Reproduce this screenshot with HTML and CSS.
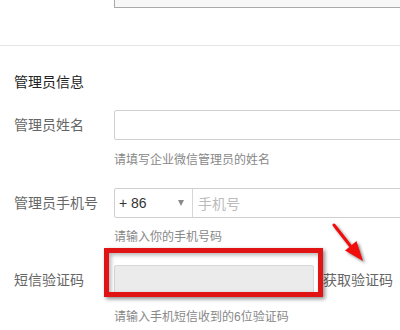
FILE: index.html
```html
<!DOCTYPE html>
<html lang="zh-CN">
<head>
<meta charset="utf-8">
<title>管理员信息</title>
<link rel="stylesheet" href="styles.css">
</head>
<body>
<div class="page">
  <div class="prev"><div class="prev-input"></div></div>
  <div class="divider"></div>
  <div class="section">
    <div class="title">管理员信息</div>

    <div class="row row-name">
      <div class="label">管理员姓名</div>
      <div class="input wide"></div>
    </div>
    <div class="hint hint-name">请填写企业微信管理员的姓名</div>

    <div class="row row-phone">
      <div class="label">管理员手机号</div>
      <div class="phone">
        <div class="cc"><span class="cc-text">+ 86</span><span class="caret"></span></div>
        <div class="ph">手机号</div>
      </div>
    </div>
    <div class="hint hint-phone">请输入你的手机号码</div>

    <div class="row row-sms">
      <div class="label">短信验证码</div>
      <div class="sms-field">
        <div class="sms-input"></div>
        <div class="redbox"></div>
      </div>
      <div class="get-code">获取验证码</div>
    </div>
    <div class="hint hint-sms">请输入手机短信收到的6位验证码</div>
  </div>

  <svg class="arrow" viewBox="325 218 50 50" width="50" height="50" aria-hidden="true">
    <line x1="334" y1="225" x2="352" y2="248" stroke="#f20d0d" stroke-width="3" stroke-linecap="round"/>
    <polygon points="363,261 356.5,241 345,250.5" fill="#f20d0d"/>
  </svg>
</div>
</body>
</html>
```

FILE: styles.css
```css
html, body {
  margin: 0;
  padding: 0;
  overflow: hidden;
  background: #fff;
}
body {
  width: 400px;
  height: 330px;
  font-family: "Liberation Sans", "Noto Sans CJK SC", sans-serif;
}
.page {
  position: relative;
  width: 400px;
  height: 330px;
  overflow: hidden;
}
.prev {
  height: 8px;
  overflow: hidden;
  display: flex;
  align-items: flex-end;
  padding-left: 114px;
}
.prev-input {
  flex: none;
  width: 320px;
  height: 30px;
  box-sizing: border-box;
  border: 1px solid #a9a9a9;
  background: #f7f7f7;
}
.divider {
  margin-top: 37px;
  height: 1px;
  background: #e4e4e4;
}
.section {
  padding-left: 14px;
}
.title {
  margin-top: 26px;
  font-size: 14px;
  line-height: 20px;
  color: #222;
}
.row {
  display: flex;
  align-items: center;
  height: 30px;
}
.row-name { margin-top: 18px; }
.row-phone { margin-top: 19px; }
.row-sms { margin-top: 19px; height: 29px; }
.label {
  flex: none;
  width: 100px;
  font-size: 14px;
  line-height: 20px;
  color: #666;
}
.input {
  flex: none;
  box-sizing: border-box;
  height: 30px;
  border: 1px solid #cfcfcf;
  border-radius: 2px;
  width: 300px;
}
.hint {
  margin-left: 100px;
  margin-top: 11px;
  font-size: 12px;
  line-height: 18px;
  color: #888;
}
.hint-phone { margin-top: 10px; }
.hint-sms { margin-top: 14px; }
.phone {
  flex: none;
  display: flex;
  box-sizing: border-box;
  width: 300px;
  height: 30px;
  border: 1px solid #cfcfcf;
  border-radius: 2px;
}
.cc {
  flex: none;
  width: 78px;
  box-sizing: border-box;
  border-right: 1px solid #d6d6d6;
  display: flex;
  align-items: center;
  justify-content: space-between;
  padding: 0 8px 0 4px;
}
.cc-text {
  font-size: 14px;
  color: #333;
}
.caret {
  width: 0;
  height: 0;
  border-left: 3px solid transparent;
  border-right: 3px solid transparent;
  border-top: 6px solid #8a8a8a;
}
.ph {
  display: flex;
  align-items: center;
  padding-left: 5px;
  font-size: 14px;
  color: #bbb;
}
.sms-field {
  position: relative;
  flex: none;
  width: 200px;
  height: 29px;
}
.sms-input {
  box-sizing: border-box;
  width: 200px;
  height: 29px;
  border: 1px solid #d8d8d8;
  border-radius: 2px;
  background: #ebebeb;
}
.redbox {
  position: absolute;
  left: -10px;
  top: -17px;
  width: 219px;
  height: 49px;
  box-sizing: border-box;
  border: 5px solid #e01414;
  box-shadow: 2px 2px 4px rgba(0, 0, 0, 0.45), inset 2px 2px 4px rgba(0, 0, 0, 0.3);
}
.get-code {
  margin-left: 9px;
  font-size: 14px;
  line-height: 20px;
  color: #666;
  white-space: nowrap;
}
.arrow {
  position: absolute;
  left: 325px;
  top: 218px;
  filter: drop-shadow(2px 2px 1.5px rgba(0, 0, 0, 0.45));
}
```
